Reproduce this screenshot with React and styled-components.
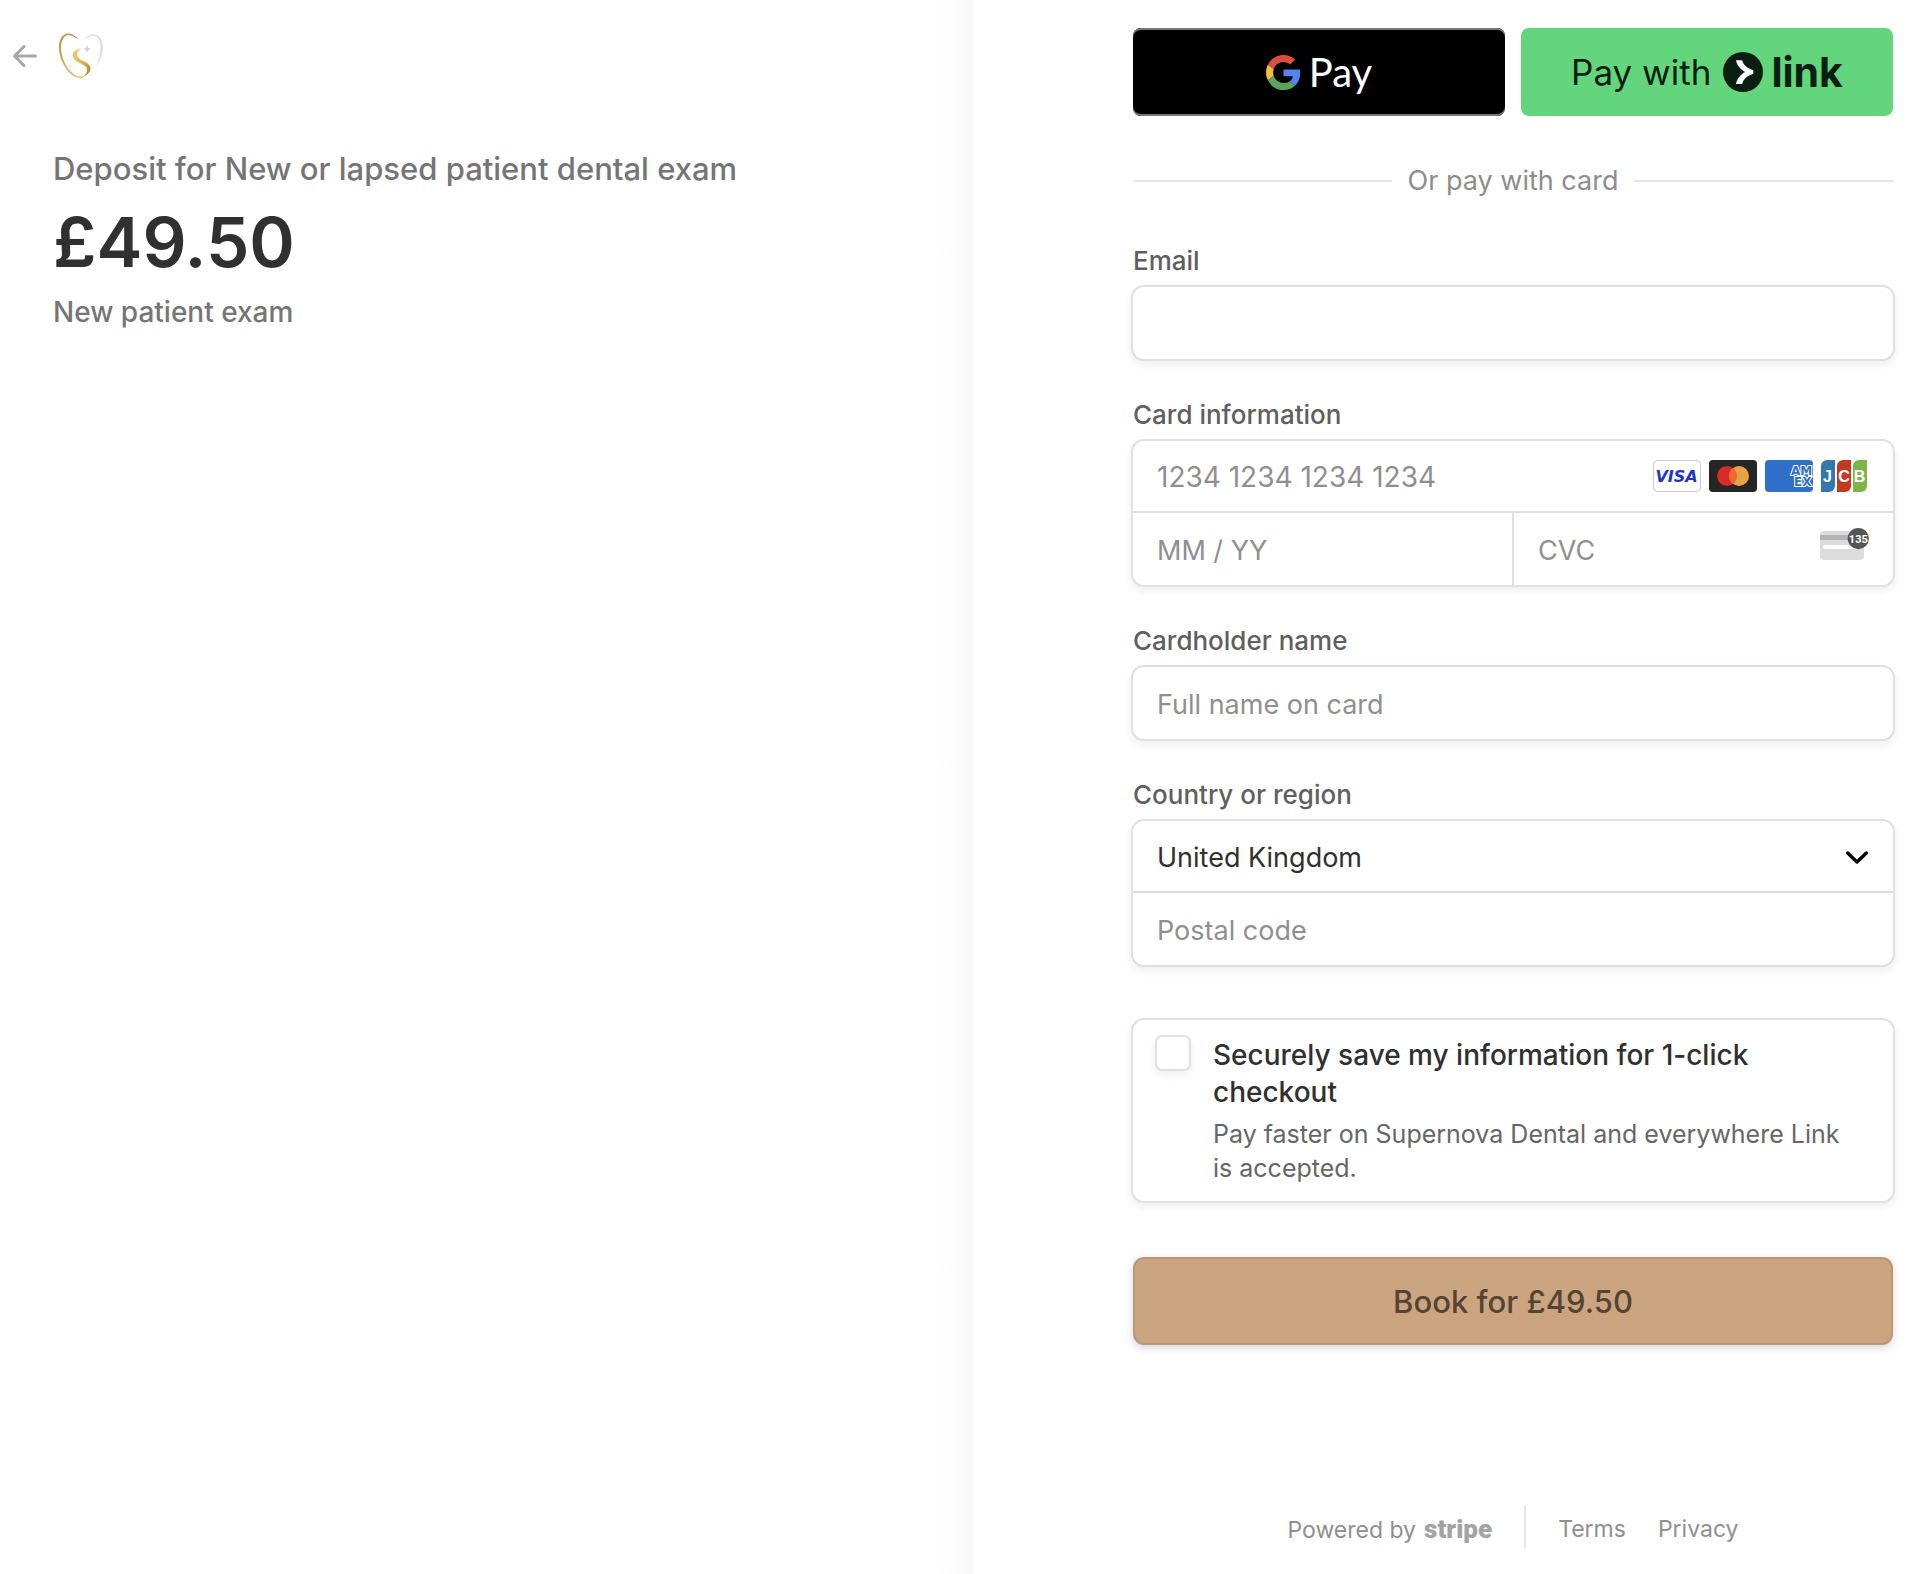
import React from "react";
import styled, { createGlobalStyle } from "styled-components";

const GlobalStyle = createGlobalStyle`
  *, *::before, *::after { box-sizing: border-box; }
  body {
    margin: 0;
    background: #fff;
    color: #303030;
    font-family: Inter, "Liberation Sans", sans-serif;
    -webkit-font-smoothing: antialiased;
  }
  h1, h2, p { margin: 0; }
`;

const Page = styled.div`
  display: grid;
  grid-template-columns: minmax(0, 973fr) minmax(0, 955fr);
  min-height: 100vh;
`;

const Summary = styled.section`
  padding: 32px 53px 0 12px;
  background: linear-gradient(to left, #f7f7f7, #fcfcfc 18px, #fff 42px);
`;

const Header = styled.header`
  display: flex;
  align-items: center;
  gap: 20px;
  height: 48px;
`;

const BackLink = styled.a`
  display: flex;
  color: #a8a8a8;
`;

const Product = styled.div`
  padding: 68px 0 0 41px;
`;

const ProductName = styled.h1`
  font-size: 31px;
  font-weight: 500;
  line-height: 42px;
  color: #757575;
`;

const Price = styled.p`
  margin: 8px 0;
  font-size: 69px;
  font-weight: 600;
  line-height: 88px;
`;

const ProductNote = styled.p`
  font-size: 28px;
  font-weight: 500;
  line-height: 36px;
  color: #757575;
`;

const Payment = styled.main`
  display: flex;
  flex-direction: column;
  padding: 28px 35px 26px 160px;
`;

const WalletRow = styled.div`
  display: grid;
  grid-template-columns: 1fr 1fr;
  gap: 16px;
`;

const WalletButton = styled.button`
  display: flex;
  align-items: center;
  justify-content: center;
  gap: ${(p) => (p.$dark ? "8px" : "12px")};
  height: 88px;
  padding: 0;
  border: 0;
  border-radius: 8px;
  font-family: inherit;
  font-size: 35px;
  cursor: pointer;
  color: ${(p) => (p.$dark ? "#fff" : "#0a1f12")};
  background: ${(p) => (p.$dark ? "#000" : "#63d57c")};
  box-shadow: ${(p) => (p.$dark ? "inset 0 2px #757575, inset 0 -2px #757575" : "none")};
`;

const GooglePayWord = styled.span`
  font-family: Lato, sans-serif;
  font-size: 40px;
  line-height: 48px;
`;

const LinkMark = styled.span`
  display: flex;
  align-items: center;
  gap: 8px;
`;

const LinkWord = styled.span`
  font-size: 41px;
  font-weight: 700;
  line-height: 48px;
`;

const Divider = styled.div`
  display: flex;
  align-items: center;
  gap: 16px;
  margin: 48px 0 47px;
  font-size: 27px;
  line-height: 34px;
  color: #8d8d8d;
  &::before, &::after {
    content: "";
    flex: 1;
    height: 2px;
    background: #e6e6e6;
  }
`;

const Form = styled.form`
  display: flex;
  flex-direction: column;
`;

const Fields = styled.div`
  display: flex;
  flex-direction: column;
  gap: 40px;
`;

const Field = styled.fieldset`
  display: flex;
  flex-direction: column;
  gap: 10px;
  min-width: 0;
  margin: 0;
  padding: 0;
  border: 0;
`;

const Label = styled.label`
  font-size: 26px;
  font-weight: 500;
  line-height: 32px;
  color: #5f5f5f;
`;

const ring = "0 0 0 2px #e0e0e0, 0 4px 8px 2px rgba(0, 0, 0, 0.07)";

const Box = styled.div`
  border-radius: 11px;
  background: #fff;
  box-shadow: ${ring};
`;

const Row = styled.div`
  display: flex;
  height: 72px;
  & + & { border-top: 2px solid #e0e0e0; }
  &:first-child:not(:last-child) { height: 70px; }
  &:last-child:not(:first-child) { height: 74px; }
`;

const Cell = styled.div`
  display: flex;
  align-items: center;
  flex: 1;
  min-width: 0;
  padding-right: 24px;
  & + & { border-left: 2px solid #e0e0e0; }
`;

const Input = styled.input`
  flex: 1;
  min-width: 0;
  height: 100%;
  padding: 2px 24px 0;
  border: 0;
  outline: 0;
  background: transparent;
  font-family: inherit;
  font-size: ${(p) => (p.$digits ? "28px" : "27px")};
  color: #303030;
  &::placeholder { color: #8f8f8f; opacity: 1; }
`;

const Brands = styled.div`
  display: flex;
  gap: 8px;
`;

const SelectWrap = styled.div`
  display: grid;
  flex: 1;
  align-items: center;
  > * { grid-area: 1 / 1; }
  > svg { justify-self: end; margin-right: 24px; pointer-events: none; }
`;

const Select = styled.select`
  appearance: none;
  width: 100%;
  height: 100%;
  padding: 2px 24px 0;
  border: 0;
  outline: 0;
  background: transparent;
  font-family: inherit;
  font-size: 27px;
  color: #303030;
`;

const SaveBox = styled(Box)`
  display: flex;
  gap: 24px;
  margin: 55px 0 56px;
  padding: 17px 32px 16px 24px;
`;

const Checkbox = styled.input`
  appearance: none;
  flex: none;
  width: 32px;
  height: 32px;
  margin: 0;
  border-radius: 5px;
  background: #fff;
  box-shadow: ${ring};
  &:checked { background: #303030; }
`;

const SaveText = styled.div`
  display: flex;
  flex-direction: column;
  gap: 6px;
`;

const SaveTitle = styled.label`
  font-size: 28px;
  font-weight: 500;
  line-height: 37px;
`;

const SaveNote = styled.p`
  font-size: 25px;
  line-height: 34px;
  color: #666;
`;

const SubmitButton = styled.button`
  height: 88px;
  border: 2px solid #bd9676;
  border-radius: 11px;
  background: #cba480;
  box-shadow: 0 3px 8px rgba(40, 50, 90, 0.2);
  font-family: inherit;
  font-size: 31px;
  font-weight: 500;
  color: #554434;
  cursor: pointer;
`;

const Footer = styled.footer`
  display: flex;
  align-items: center;
  justify-content: center;
  gap: 32px;
  margin-top: auto;
  font-size: 23px;
  color: #8f8f8f;
`;

const FooterLink = styled.a`
  display: flex;
  align-items: baseline;
  gap: 8px;
  padding-top: 4px;
  line-height: 32px;
  color: inherit;
  text-decoration: none;
`;

const StripeWord = styled.span`
  font-family: Roboto, sans-serif;
  font-size: 26px;
  font-weight: 900;
  color: #a3a3a3;
`;

const FooterRule = styled.span`
  width: 2px;
  height: 42px;
  background: #e6e6e6;
`;

const BackArrow = () => (
  <svg width="26" height="26" viewBox="0 0 26 26" fill="none" stroke="currentColor" strokeWidth="3" strokeLinecap="round" strokeLinejoin="round" aria-hidden="true">
    <path d="M12 3.500L2.500 13L12 22.500M2.500 13H23.500" />
  </svg>
);

const ToothLogo = () => (
  <svg width="46" height="48" viewBox="0 0 46 48" fill="none" role="img" aria-label="Supernova Dental">
    <defs>
      <linearGradient id="gold" x1="0" y1="0" x2="0" y2="1">
        <stop offset="0" stopColor="#b2914c" />
        <stop offset="0.500" stopColor="#c9a145" />
        <stop offset="1" stopColor="#dcc07a" />
      </linearGradient>
      <linearGradient id="goldS" x1="0" y1="0" x2="1" y2="1">
        <stop offset="0" stopColor="#f0d27a" />
        <stop offset="0.500" stopColor="#dfb44c" />
        <stop offset="1" stopColor="#a8852f" />
      </linearGradient>
    </defs>
    <path fill="url(#gold)" d="M21.500 7.300C16.500 6 15 3 10.500 3C6 3 2.900 8.500 3 16C3.200 28 12 44.300 23 44.500C25 44.500 27 44 28.500 42.500C27 44.800 25 46 22.500 46C10.500 45.600 1.300 28.500 1 16C0.800 8 4 1.800 10.500 1.600C15.500 1.600 17.500 5.500 21.500 7.300Z" />
    <path fill="url(#goldS)" d="M23 17C17 16.500 14 20.500 14.800 24.500C16 29.500 23.500 31 27.200 34C30 36.500 29.500 41 26 43.800C30 43 32.700 39.500 32.500 36C32 31.500 26.500 30 22.500 27.500C18 24.700 17.500 19.500 23 17Z" />
    <path fill="#dcdcdc" d="M25 7C29 5.800 30.500 2.200 35.500 2.200C42 2.600 45.300 9 44.800 17C44.300 23 41.500 29.500 38.300 34C40.500 28.500 42 23 42.500 17C43.100 10 40.500 4 35.500 3.700C31.500 3.400 29 6.700 25 7Z" />
    <path fill="#d2d2d2" d="M29 12.500C29.600 15.600 30.200 16.400 33.500 17C30.200 17.600 29.600 18.400 29 21.500C28.400 18.400 27.800 17.600 24.500 17C27.800 16.400 28.400 15.600 29 12.500Z" />
  </svg>
);

const GoogleMark = () => (
  <svg width="35" height="35" viewBox="0 0 48 48" aria-hidden="true">
    <path fill="#d94f3d" d="M24 9.500c3.540 0 6.710 1.220 9.210 3.600l6.850-6.850C35.900 2.380 30.470 0 24 0 14.620 0 6.510 5.380 2.560 13.220l7.980 6.190C12.430 13.720 17.740 9.500 24 9.500z" />
    <path fill="#5383ec" d="M46.980 24.550c0-1.570-.15-3.090-.38-4.550H24v9.020h12.940c-.58 2.960-2.260 5.480-4.780 7.180l7.730 6c4.510-4.180 7.090-10.360 7.090-17.650z" />
    <path fill="#f2bd42" d="M10.530 28.590c-.48-1.450-.76-2.990-.76-4.590s.27-3.140.76-4.590l-7.980-6.190C.92 16.460 0 20.120 0 24c0 3.880.92 7.540 2.560 10.780l7.970-6.190z" />
    <path fill="#58a55c" d="M24 48c6.480 0 11.930-2.130 15.890-5.810l-7.730-6c-2.150 1.450-4.920 2.300-8.160 2.300-6.260 0-11.570-4.220-13.470-9.910l-7.980 6.190C6.510 42.620 14.620 48 24 48z" />
  </svg>
);

const LinkIcon = () => (
  <svg width="40" height="40" viewBox="0 0 40 40" aria-hidden="true">
    <circle cx="20" cy="20" r="20" fill="#0a1f12" />
    <path fill="#fff" d="M13 8.300H19.200C20.200 12.500 23.500 16 30.300 18.300V21.700C23.500 24 20.200 27.500 19.200 32H13C14 26.500 17.500 22.500 22 20C17.500 17.500 14 13.500 13 8.300Z" />
  </svg>
);

const wideFont = { fontFamily: "'DejaVu Sans', sans-serif", fontWeight: 700 };

const Visa = () => (
  <svg width="48" height="32" viewBox="0 0 48 32" role="img" aria-label="Visa">
    <rect x="0.500" y="0.500" width="47" height="31" rx="4" fill="#fff" stroke="#c8c8c8" />
    <text x="23.500" y="22" textAnchor="middle" fontSize="16" fontStyle="italic" fill="#1f34c4" {...wideFont}>VISA</text>
  </svg>
);

const Mastercard = () => (
  <svg width="48" height="32" viewBox="0 0 48 32" role="img" aria-label="Mastercard">
    <rect width="48" height="32" rx="4" fill="#252525" />
    <circle cx="18" cy="16" r="10" fill="#d82b29" />
    <circle cx="30" cy="16" r="10" fill="#e9a243" />
    <path d="M24 8a10 10 0 0 1 0 16a10 10 0 0 1 0-16z" fill="#ed6a2c" />
  </svg>
);

const Amex = () => (
  <svg width="48" height="32" viewBox="0 0 48 32" role="img" aria-label="American Express">
    <clipPath id="amexCard"><rect width="48" height="32" rx="4" /></clipPath>
    <g clipPath="url(#amexCard)">
      <rect width="48" height="32" fill="#306fc9" />
      <text fill="#306fc9" stroke="#fff" strokeWidth="2" paintOrder="stroke" fontSize="12" {...wideFont}>
        <tspan x="26" y="14.500">AM</tspan>
        <tspan x="29" y="26">EX</tspan>
      </text>
    </g>
  </svg>
);

const Jcb = () => (
  <svg width="48" height="32" viewBox="0 0 48 32" role="img" aria-label="JCB">
    <path fill="#3478af" d="M6 0H14V26A6 6 0 0 1 8 32H0V6A6 6 0 0 1 6 0Z" />
    <path fill="#c33a20" d="M22 0H30V26A6 6 0 0 1 24 32H16V6A6 6 0 0 1 22 0Z" />
    <path fill="#7cb548" d="M38 0H46V26A6 6 0 0 1 40 32H32V6A6 6 0 0 1 38 0Z" />
    <text y="21.500" fill="#fff" fontSize="16" textAnchor="middle" fontFamily="'Liberation Sans', sans-serif" fontWeight="700">
      <tspan x="6.500">J</tspan>
      <tspan x="23">C</tspan>
      <tspan x="38.500">B</tspan>
    </text>
  </svg>
);

const CvcIcon = () => (
  <svg width="49" height="42" viewBox="0 0 49 42" aria-hidden="true">
    <rect y="3" width="44" height="29" rx="4" fill="#dcdcdc" />
    <rect y="7" width="44" height="5" fill="#b3b3b3" />
    <rect x="3" y="17" width="38" height="4" rx="2" fill="#fff" />
    <circle cx="38.300" cy="10.600" r="10.600" fill="#545454" />
    <text x="38.300" y="14.600" textAnchor="middle" fontSize="11" fill="#fff" fontFamily="Roboto, sans-serif" fontWeight="700">135</text>
  </svg>
);

const Chevron = () => (
  <svg width="24" height="22" viewBox="0 0 24 22" fill="none" stroke="#000" strokeWidth="3.400" strokeLinecap="round" strokeLinejoin="round" aria-hidden="true">
    <path d="M2.700 8L12 17L21.300 8" />
  </svg>
);

export default function App() {
  return (
    <>
      <GlobalStyle />
      <Page>
        <Summary>
          <Header>
            <BackLink href="#" aria-label="Back"><BackArrow /></BackLink>
            <ToothLogo />
          </Header>
          <Product>
            <ProductName>Deposit for New or lapsed patient dental exam</ProductName>
            <Price>£49.50</Price>
            <ProductNote>New patient exam</ProductNote>
          </Product>
        </Summary>
        <Payment>
          <WalletRow>
            <WalletButton type="button" $dark>
              <GoogleMark />
              <GooglePayWord>Pay</GooglePayWord>
            </WalletButton>
            <WalletButton type="button">
              Pay with
              <LinkMark>
                <LinkIcon />
                <LinkWord>link</LinkWord>
              </LinkMark>
            </WalletButton>
          </WalletRow>
          <Divider>Or pay with card</Divider>
          <Form onSubmit={(e) => e.preventDefault()}>
            <Fields>
              <Field>
                <Label htmlFor="email">Email</Label>
                <Box><Row><Input id="email" type="email" /></Row></Box>
              </Field>
              <Field>
                <Label htmlFor="number">Card information</Label>
                <Box>
                  <Row>
                    <Cell>
                      <Input id="number" $digits placeholder="1234 1234 1234 1234" />
                      <Brands><Visa /><Mastercard /><Amex /><Jcb /></Brands>
                    </Cell>
                  </Row>
                  <Row>
                    <Cell><Input aria-label="Expiry date" placeholder="MM / YY" /></Cell>
                    <Cell><Input aria-label="Security code" placeholder="CVC" /><CvcIcon /></Cell>
                  </Row>
                </Box>
              </Field>
              <Field>
                <Label htmlFor="name">Cardholder name</Label>
                <Box><Row><Input id="name" placeholder="Full name on card" /></Row></Box>
              </Field>
              <Field>
                <Label htmlFor="country">Country or region</Label>
                <Box>
                  <Row>
                    <SelectWrap>
                      <Select id="country" defaultValue="GB"><option value="GB">United Kingdom</option></Select>
                      <Chevron />
                    </SelectWrap>
                  </Row>
                  <Row><Input aria-label="Postal code" placeholder="Postal code" /></Row>
                </Box>
              </Field>
            </Fields>
            <SaveBox>
              <Checkbox id="save" type="checkbox" />
              <SaveText>
                <SaveTitle htmlFor="save">Securely save my information for 1-click checkout</SaveTitle>
                <SaveNote>Pay faster on Supernova Dental and everywhere Link is accepted.</SaveNote>
              </SaveText>
            </SaveBox>
            <SubmitButton type="submit">Book for £49.50</SubmitButton>
          </Form>
          <Footer>
            <FooterLink href="#">Powered by <StripeWord>stripe</StripeWord></FooterLink>
            <FooterRule />
            <FooterLink href="#">Terms</FooterLink>
            <FooterLink href="#">Privacy</FooterLink>
          </Footer>
        </Payment>
      </Page>
    </>
  );
}
